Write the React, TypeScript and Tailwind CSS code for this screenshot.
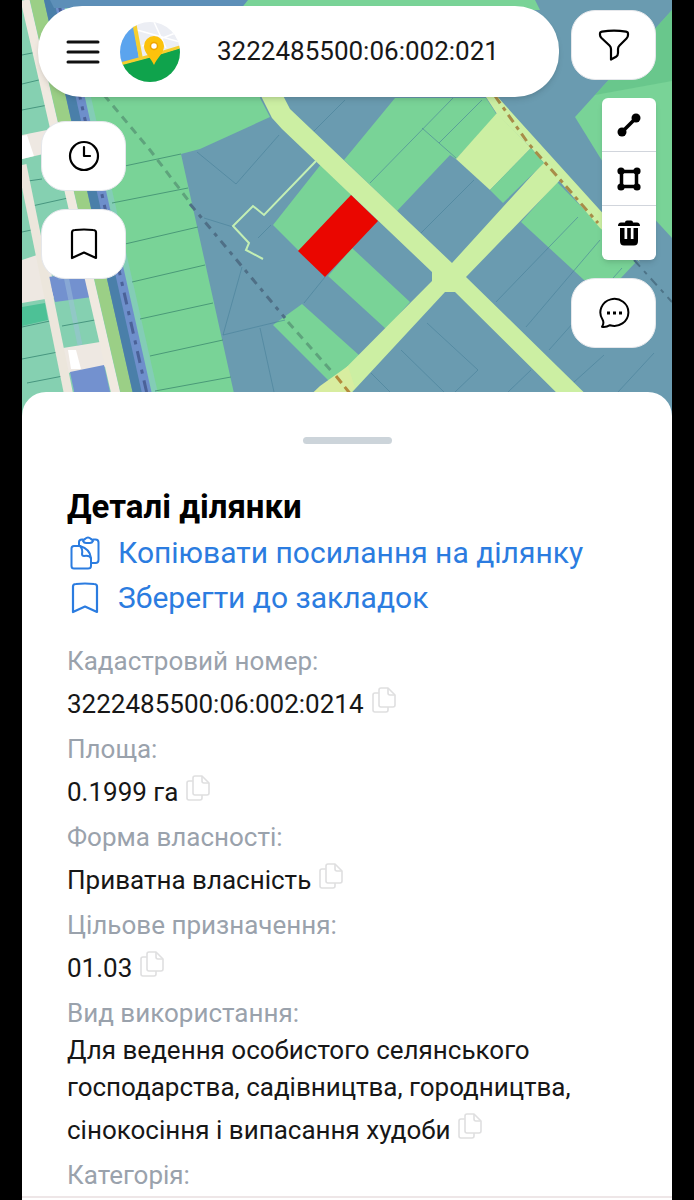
import { useState } from 'react';

const details = [
  { label: 'Кадастровий номер:', value: '3222485500:06:002:0214' },
  { label: 'Площа:', value: '0.1999 га' },
  { label: 'Форма власності:', value: 'Приватна власність' },
  { label: 'Цільове призначення:', value: '01.03' },
  {
    label: 'Вид використання:',
    value: 'Для ведення особистого селянського господарства, садівництва, городництва, сінокосіння і випасання худоби',
  },
];

function BookmarkIcon({ className }: { className: string }) {
  return (
    <svg viewBox="0 0 30 32" className={className} fill="none" stroke="currentColor" strokeWidth="2.2" strokeLinejoin="round" aria-hidden="true">
      <path d="M3 30V4.500Q3 2 6 2Q15 1 24 2Q27 2 27 4.500V30L15 24.500Z" />
    </svg>
  );
}

function CopyIcon() {
  return (
    <svg viewBox="0 0 24 26" className="block h-[26px] w-6" fill="none" stroke="currentColor" strokeWidth="1.6" strokeLinejoin="round" aria-hidden="true">
      <path d="M7 6H3Q1 6 1 8V23Q1 25 3 25H14Q16 25 16 23V20" />
      <path d="M9 1H16L23 8V18Q23 20 21 20H9Q7 20 7 18V3Q7 1 9 1Z" />
      <path d="M16 1V6Q16 8 18 8H23" />
    </svg>
  );
}

function ClipboardIcon() {
  return (
    <svg viewBox="0 0 30 34" className="h-[34px] w-[30px]" fill="none" stroke="currentColor" strokeWidth="2" strokeLinecap="round" strokeLinejoin="round" aria-hidden="true">
      <path d="M10 10H4Q1.500 10 1.500 12.500V30Q1.500 32.500 4 32.500H18Q21 32.500 21 30V22Q20 13 10 10Z" />
      <path d="M10 10Q13 13 12 18Q12 20 14 20Q20 19 21 23" />
      <path d="M9 9V6Q9 3.500 12 3.500H13M23 3.500H25.500Q28.500 3.500 28.500 6.500V24Q28.500 27 25.500 27H22" />
      <path d="M13 5Q14 3.500 15 3Q18 0 21 3Q22 3.500 23 5Q22 7 20 7H16Q14 7 13 5Z" />
    </svg>
  );
}

function Logo() {
  return (
    <svg viewBox="0 0 60 60" className="size-[60px] shrink-0" role="img" aria-label="Карта">
      <defs>
        <clipPath id="logo-clip">
          <circle cx="30" cy="30" r="30" />
        </clipPath>
      </defs>
      <g clipPath="url(#logo-clip)">
        <rect width="60" height="60" fill="#eceef4" />
        <path d="M17 8L60 20M34 0L46 26M22 24L58 10" stroke="#fff" strokeWidth="1.500" />
        <path d="M0 0H13L19 36L0 42Z" fill="#5ba4ee" />
        <path d="M14 0L21 37" stroke="#f6cf2e" strokeWidth="4" />
        <path d="M0 43L30 35L60 26V60H0Z" fill="#0fa34c" />
        <path d="M0 42L30 34L60 25" stroke="#f6cf2e" strokeWidth="3" fill="none" />
      </g>
      <path d="M34 43C31 36 24 31 24 24A10 10 0 0 1 44 24C44 31 37 36 34 43Z" fill="#fcc20c" />
      <circle cx="34" cy="24" r="3.500" fill="#fff" stroke="#f0a500" strokeWidth="1.500" />
    </svg>
  );
}

function ParcelMap() {
  return (
    <svg
      viewBox="22 0 650 416"
      preserveAspectRatio="xMidYMin slice"
      className="size-full min-w-0 [grid-area:1/1]"
      role="img"
      aria-label="Кадастрова карта"
    >
      <rect x="22" width="650" height="416" fill="#6a9bb0" />

      {/* Gardens on the left edge */}
      <path d="M22 0H40L135 416H22Z" fill="#85d0b1" />
      <path d="M22 307L45 303L48 320L22 326Z" fill="#4dc196" />
      <path d="M22 135L47 130L52 152L22 159ZM22 260L46 252L57 297L22 303ZM63 348L100 342L108 366L68 373Z" fill="#eee8e2" />
      <path d="M22 136L27 135L34 156L22 159ZM68 350H76L81 369H71Z" fill="#fff" />
      <path d="M48 277L88 272L92 297L55 302ZM70 372L104 365L114 410H78Z" fill="#7391cf" />
      <path d="M58 277L66 276L80 345" stroke="#9dc0dc" strokeWidth="5" fill="none" opacity=".5" />
      <path d="M22 55L37 52M22 84L43 79M22 110L48 105M28 181L42 179M32 206L68 198M22 232L36 229M62 326L95 320M22 327L50 321M22 359L58 352M27 383L63 376" stroke="#47967f" strokeWidth="1" fill="none" />
      <path d="M22 165L73 416" stroke="#ece6dc" strokeWidth="9" />
      <path d="M25 0L121 416" stroke="#f0e9e0" strokeWidth="9" />
      <path d="M30 0H44L138 416H126Z" fill="#9bcf86" />
      <path d="M44 0H66L160 416H138Z" fill="#4a7fa9" />
      <path d="M54 0H64L159 416H147Z" fill="#6e8fcb" />
      <path d="M58 0L152 416" stroke="#4b6298" strokeWidth="3" strokeDasharray="12 7 4 7" />

      {/* Large fields */}
      <path d="M66 0H300L260 98L270 117L200 149L181 154L239 416H160Z" fill="#79d397" />
      <path d="M66 0L160 416" stroke="#83cdb6" strokeWidth="6" />
      <path d="M50 0H248V8H54Z" fill="#5d8fb8" />
      <path d="M248 0H535L540 10H240Z" fill="#79d397" />
      <path d="M120 167L181 154M112 203L188 188M125 244L198 227M132 282L205 265M140 319L213 303M150 356L223 340M155 391L231 377" stroke="#4a9a78" strokeWidth="1" fill="none" />
      <path d="M672 10L575 117L604 164L672 238Z" fill="#79d397" />
      <path d="M672 10L595 95L672 81Z" fill="#5fc086" opacity=".6" />

      {/* Parcels */}
      <path d="M395 98H486L497 115L456 159L450 155L397 211L344 160Z" fill="#79d397" />
      <path d="M497 113L531 148L490 190L456 159Z" fill="#ccefa3" />
      <path d="M557 182L636 262L619 280H584L521 222Z" fill="#79d397" />
      <path d="M322 163L352 195L299 251L273 225Z" fill="#79d397" />
      <path d="M352 248L410 302L386 329L328 276Z" fill="#79d397" />
      <path d="M302 304L360 356L333 385L273 325Z" fill="#79d397" />
      <path
        d="M197 152L236 184L279 135M345 100L312 133M204 218L233 227M242 267L223 335L285 320M260 328L274 392M271 225L258 238M325 277L304 303M422 128L456 158M453 98L370 183M482 100L439 143M474 180L416 238M578 217L496 302M600 240L526 327M622 268L549 350M427 323L478 370L455 392M401 350L444 392M371 373L390 392M531 370L508 392M604 355L563 392M654 353L618 392"
        stroke="#47809a"
        strokeWidth="1"
        fill="none"
        opacity=".6"
      />

      {/* Roads */}
      <g fill="#ccefa3">
        <path d="M248 70L272 118L282 129L432 272V281L298 416H330L445 292H455L580 416H608L466 277L560 180L544 162L452 263L290 109L275 80Z" />
        <path d="M484 94H495L608 219L640 262L600 228L532 149L497 114Z" />
      </g>
      <path d="M531 148L544 163L503 203L490 190Z" fill="#79d397" />
      <path d="M320 386L348 366L355 388L335 405H300Z" fill="#d8eda0" />
      <path d="M495 96L528 143L598 223" stroke="#a88c48" strokeWidth="3" strokeDasharray="9 5 4 5" fill="none" />
      <path d="M634 260L672 302" stroke="#4d7387" strokeWidth="2" strokeDasharray="9 6 4 6" />
      <path d="M104 95L150 150L188 200" stroke="#5ea37c" strokeWidth="3" strokeDasharray="8 6" fill="none" />
      <path d="M190 204L285 318" stroke="#4f6f86" strokeWidth="3" strokeDasharray="8 6 4 6" fill="none" />
      <path d="M288 322L334 374" stroke="#5ea37c" strokeWidth="3" strokeDasharray="8 6" fill="none" />
      <path d="M336 376L352 396" stroke="#b38b3c" strokeWidth="3" strokeDasharray="9 5" fill="none" />
      <path d="M316 161L264 215L253 206L233 226L249 243L246 250L263 259" stroke="#c3efb4" strokeWidth="2" fill="none" />

      {/* Selected parcel */}
      <path d="M351 195L378 221L325 277L298 251Z" fill="#ea0600" />
    </svg>
  );
}

const roundButton = 'flex h-[70px] w-[85px] items-center justify-center rounded-3xl border border-gray-200 bg-white text-black';
const toolButton = 'flex h-[54px] w-full items-center justify-center';

export default function App() {
  const [query, setQuery] = useState('3222485500:06:002:021');

  return (
    <div className="flex min-h-screen flex-col bg-black px-[22px] font-['Roboto',sans-serif]">
      <section className="grid grid-cols-1">
        <ParcelMap />

        {/* Map controls */}
        <div className="z-10 flex gap-3 px-4 pb-[68px] [grid-area:1/1]">
          <div className="min-w-0 flex-1 pt-[6px]">
            <header className="flex h-[91px] items-center rounded-[44px] bg-white pl-7 pr-6 shadow-md">
              <button aria-label="Меню" className="mr-5 flex shrink-0 items-center">
                <svg viewBox="0 0 34 28" className="h-7 w-[34px]" stroke="#111" strokeWidth="3" strokeLinecap="round" aria-hidden="true">
                  <path d="M2 4H32M2 14H32M2 24H32" />
                </svg>
              </button>
              <Logo />
              <input
                type="text"
                aria-label="Кадастровий номер"
                value={query}
                onChange={(e) => setQuery(e.target.value)}
                className="ml-[37px] min-w-0 flex-1 bg-transparent text-[26px] text-neutral-900 outline-none"
              />
            </header>
            <div className="mt-6 flex flex-col gap-[18px] pl-[3px]">
              <button aria-label="Історія" className={roundButton}>
                <svg viewBox="0 0 32 32" className="size-8" fill="none" stroke="currentColor" strokeWidth="2.2" strokeLinecap="round" strokeLinejoin="round" aria-hidden="true">
                  <circle cx="16" cy="16" r="14" />
                  <path d="M16 7V16H22" />
                </svg>
              </button>
              <button aria-label="Закладки" className={roundButton}>
                <BookmarkIcon className="h-8 w-[30px]" />
              </button>
            </div>
          </div>

          <div className="flex w-[85px] shrink-0 flex-col items-end pt-[10px]">
            <button aria-label="Фільтр" className={roundButton}>
              <svg viewBox="0 0 32 32" className="size-8" fill="none" stroke="currentColor" strokeWidth="2.2" strokeLinejoin="round" aria-hidden="true">
                <path d="M2 4.500Q2 3 4 2.600Q16 0.800 28 2.600Q30 3 30 4.500V6Q30 8 28.500 9.500L21.500 16.500Q20 18 20 20V24Q20 26.500 18 27.800L13 30.500V20Q13 18 11.500 16.500L3.500 9Q2 7.500 2 6Z" />
              </svg>
            </button>
            <div className="mt-[18px] w-[54px] divide-y divide-gray-300 rounded-md bg-white text-black shadow-md">
              <button aria-label="Виміряти відстань" className={toolButton}>
                <svg viewBox="0 0 24 24" className="size-6" fill="currentColor" aria-hidden="true">
                  <path d="M5 19L19 5" stroke="currentColor" strokeWidth="3.500" />
                  <circle cx="5" cy="19" r="4.500" />
                  <circle cx="19" cy="5" r="4.500" />
                </svg>
              </button>
              <button aria-label="Виміряти площу" className={toolButton}>
                <svg viewBox="0 0 24 24" className="size-6" fill="currentColor" aria-hidden="true">
                  <path d="M4.500 4.500H19.500V19.500H4.500Z" fill="none" stroke="currentColor" strokeWidth="3.500" />
                  <circle cx="4" cy="4" r="3.600" />
                  <circle cx="20" cy="4" r="3.600" />
                  <circle cx="4" cy="20" r="3.600" />
                  <circle cx="20" cy="20" r="3.600" />
                </svg>
              </button>
              <button aria-label="Очистити" className={toolButton}>
                <svg viewBox="0 0 24 26" className="h-[26px] w-6" fill="currentColor" aria-hidden="true">
                  <path d="M1 6Q1 2.500 4 2.500H8Q8 0.500 10 0.500H14Q16 0.500 16 2.500H20Q23 2.500 23 6Z" />
                  <path d="M3 8H7.500V19H10.200V8H13.800V19H16.500V8H21V21Q21 25.500 17 25.500H7Q3 25.500 3 21Z" />
                </svg>
              </button>
            </div>
            <button aria-label="Чат" className={`mt-[18px] ${roundButton}`}>
              <svg viewBox="0 0 32 32" className="size-8" fill="none" stroke="currentColor" strokeWidth="2" strokeLinejoin="round" aria-hidden="true">
                <path d="M4.500 22.500A14 13.500 0 1 1 12 28.200Q8 30.500 4 29.800Q6.500 26 4.500 22.500Z" />
                <path d="M9 16H12M15 16H18M21 16H24" strokeWidth="3" />
              </svg>
            </button>
          </div>
        </div>
      </section>

      {/* Bottom sheet with parcel details */}
      <main className="z-10 -mt-6 flex-1 rounded-t-3xl bg-white px-[45px] pt-[45px]">
        <div className="mx-auto h-[7px] w-[89px] rounded-full bg-[#ccd4da]" />
        <h1 className="mt-10 text-[33px] leading-[46px] font-bold text-black">Деталі ділянки</h1>
        <div className="text-[30px] leading-[45px] text-[#2b7ce0]">
          <button className="flex items-center gap-[18px] pl-[3px] text-left">
            <ClipboardIcon />
            Копіювати посилання на ділянку
          </button>
          <button className="flex items-center gap-[18px] pl-[3px] text-left">
            <BookmarkIcon className="h-8 w-[30px]" />
            Зберегти до закладок
          </button>
        </div>

        <dl className="mt-[23px] text-[26px] leading-[37px]">
          {details.map((item) => (
            <div key={item.label} className="mb-2">
              <dt className="text-[#9aa2ac]">{item.label}</dt>
              <dd className="text-neutral-900">
                {item.value}
                <button aria-label="Копіювати" className="ml-2 inline-block pt-[7px] align-baseline text-[#dfdfe0]">
                  <CopyIcon />
                </button>
              </dd>
            </div>
          ))}
          <div>
            <dt className="text-[#9aa2ac]">Категорія:</dt>
          </div>
        </dl>
      </main>
      <footer className="h-1 border-t-2 border-[#eee6e7] bg-white" />
    </div>
  );
}
